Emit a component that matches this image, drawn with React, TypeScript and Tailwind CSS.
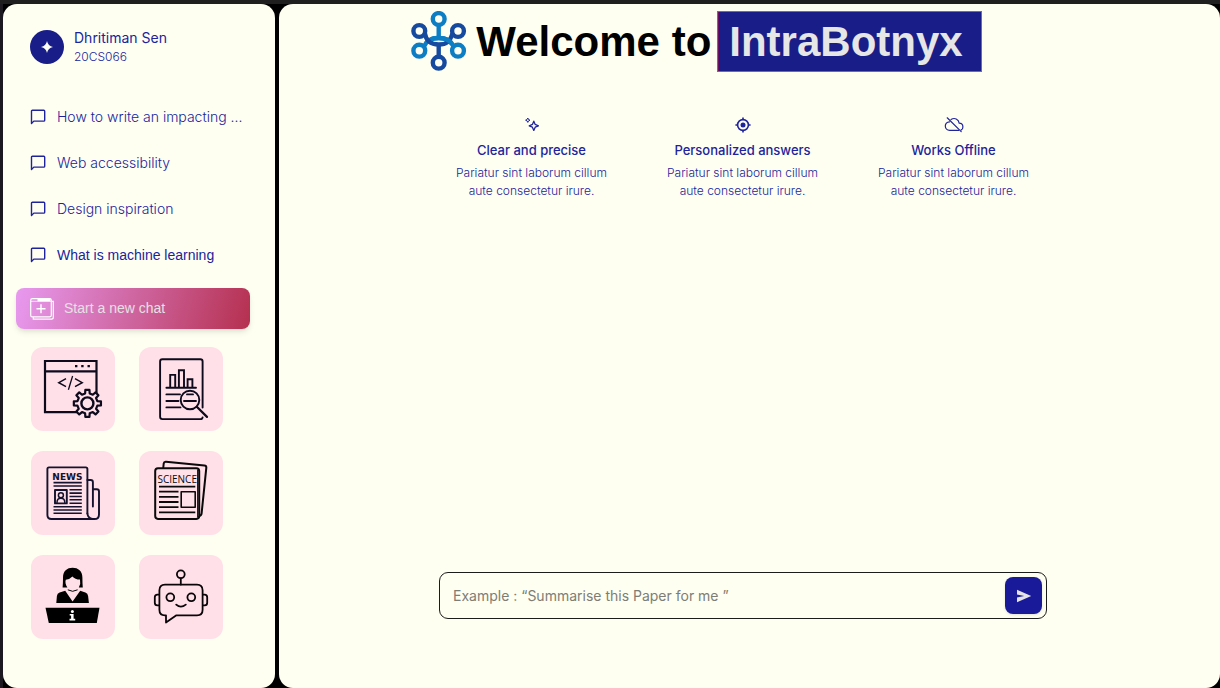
import React from "react";

const chats = [
  { title: "How to write an impacting ...", font: "font-['Inter'] font-light" },
  { title: "Web accessibility", font: "font-['Inter'] font-light" },
  { title: "Design inspiration", font: "font-['Inter'] font-light" },
  { title: "What is machine learning", font: "font-['Liberation_Sans']" },
];

function ChatIcon() {
  return (
    <svg width="16" height="16" viewBox="0 0 16 16" fill="none" stroke="#20249c" strokeWidth="1.4" strokeLinejoin="round" aria-hidden="true">
      <path d="M1.5 14.6V2.2Q1.5 1.3 2.4 1.3H13.8Q14.7 1.3 14.7 2.2V11.2Q14.7 12.1 13.8 12.1H3.8Z" />
    </svg>
  );
}

function NewChatIcon() {
  return (
    <svg width="24" height="22" viewBox="0 0 24 22" fill="none" stroke="#fff" strokeWidth="1.2" aria-hidden="true">
      <rect x="0.7" y="0.7" width="20.6" height="18.2" rx="1.6" />
      <path d="M7.5 2H20.5" strokeWidth="2.6" />
      <path d="M1 3.3H21" strokeWidth="0.8" />
      <path d="M22 3.4H23.3V19.3Q23.3 21.2 21.4 21.2H3.3V19.3" />
      <path d="M11 6.3V15.3M6.5 10.8H15.5" strokeWidth="1.4" />
    </svg>
  );
}

function LogoIcon() {
  const dark = "#164a9f";
  const light = "#0d7dc4";
  return (
    <svg width="57" height="60" viewBox="0 0 57 60" fill="none" strokeWidth="4.4" aria-hidden="true">
      <g stroke={light}>
        <circle cx="28.7" cy="8" r="5.9" />
        <circle cx="9.3" cy="39.7" r="5.9" />
        <circle cx="48" cy="39.7" r="5.9" />
        <path d="M28.7 14V26" />
        <path d="M14 35.5C16 30 21 27 28.7 27S41 29 43.5 35.5" />
      </g>
      <g stroke={dark}>
        <circle cx="9.3" cy="20" r="5.9" />
        <circle cx="48" cy="20" r="5.9" />
        <circle cx="28.7" cy="51.7" r="5.9" />
        <path d="M28.7 34V46" />
        <path d="M14.8 22C16 30 21 33.5 28.7 33.5S40 31 42.6 22" />
      </g>
      <path d="M21 28.2Q24 27 28.7 27Q38 27 42 33" stroke={light} />
    </svg>
  );
}

function SparkleIcon() {
  return (
    <svg width="16" height="16" viewBox="0 0 16 16" fill="none" stroke="#20249c" strokeWidth="1.3" strokeLinejoin="round" aria-hidden="true">
      <path d="M9.8 4.2L11.2 7.4L14.4 8.8L11.2 10.2L9.8 13.4L8.4 10.2L5.2 8.8L8.4 7.4Z" />
      <path d="M3.8 1L4.5 2.5L6 3.2L4.5 3.9L3.8 5.4L3.1 3.9L1.6 3.2L3.1 2.5Z" strokeWidth="1" />
    </svg>
  );
}

function TargetIcon() {
  return (
    <svg width="16" height="16" viewBox="0 0 16 16" fill="none" stroke="#20249c" strokeWidth="1.6" aria-hidden="true">
      <circle cx="8" cy="8" r="5.4" />
      <circle cx="8" cy="8" r="2.5" fill="#20249c" stroke="none" />
      <path d="M8 0.4V3M8 13V15.6M0.4 8H3M13 8H15.6" />
    </svg>
  );
}

function OfflineIcon() {
  return (
    <svg width="20" height="16" viewBox="0 0 20 16" fill="none" stroke="#20249c" strokeWidth="1.2" strokeLinecap="round" aria-hidden="true">
      <path d="M3.2 0.8L17.2 14.6" />
      <path d="M7 2.5C10.5 0.3 14.6 2 15.2 6.2C17.4 6.3 18.9 7.8 18.9 9.9C18.9 11.4 18.2 12.6 17 13.1" />
      <path d="M5.6 4.8C3 5 1.3 6.9 1.3 9.1C1.3 11.5 3.2 13.4 5.6 13.4H14.6" />
    </svg>
  );
}

function gearPath(cx: number, cy: number, outer: number, inner: number, teeth: number) {
  const step = (Math.PI * 2) / teeth;
  const points: string[] = [];
  for (let i = 0; i < teeth; i++) {
    const a = i * step - Math.PI / 2;
    const corners: [number, number][] = [
      [inner, -0.29],
      [outer, -0.19],
      [outer, 0.19],
      [inner, 0.29],
    ];
    for (const [r, k] of corners) {
      points.push(`${(cx + r * Math.cos(a + k * step)).toFixed(2)} ${(cy + r * Math.sin(a + k * step)).toFixed(2)}`);
    }
  }
  return `M${points.join("L")}Z`;
}

function CodeArt() {
  return (
    <svg className="size-full" viewBox="0 0 84 84" fill="none" stroke="#0d0a1c" strokeWidth="2.2" aria-hidden="true">
      <path d="M14 14H65.5V65.2H14Z" />
      <path d="M14 24.3H65.5" />
      <path d="M44 19.2H46.4M50.2 19.2H52.6M56.5 19.2H58.9" strokeWidth="2.2" />
      <path d="M35 31.7L27.8 35.7L35 39.7M44 31.7L51.2 35.7L44 39.7" strokeWidth="1.5" />
      <path d="M41.6 29L37.4 42.7" strokeWidth="1.3" />
      <circle cx="56.4" cy="56.4" r="13" fill="#ffe0e9" stroke="none" />
      <path d={gearPath(56.4, 56.4, 13.7, 10.2, 8)} fill="#ffe0e9" strokeLinejoin="round" />
      <circle cx="56.4" cy="56.4" r="6" strokeWidth="2.4" />
    </svg>
  );
}

function ReportArt() {
  return (
    <svg className="size-full" viewBox="0 0 84 84" fill="none" stroke="#0d0a1c" strokeWidth="1.9" strokeLinecap="round" aria-hidden="true">
      <path d="M63.6 60.5V14.5Q63.6 12.2 61.3 12.2H23.4Q21.1 12.2 21.1 14.5V69.8Q21.1 72.1 23.4 72.1H61.3Q63.4 72.1 63.6 70.4" />
      <path d="M31.2 40V27.9H36.2V40M39.9 40V23.3H45V40M48.6 40V32.2H53.4V40M27.4 40.8H57" strokeLinejoin="miter" />
      <path d="M27.4 47.4H41M27.4 54H39.5M27.4 60.4H41.5M48 47.4H54M45 54H57" />
      <circle cx="51" cy="53" r="9.3" />
      <path d="M57.8 59.7L68 69.9" strokeWidth="2.2" />
    </svg>
  );
}

function NewsArt() {
  return (
    <svg className="size-full" viewBox="0 0 84 84" fill="none" stroke="#14122c" strokeWidth="1.9" strokeLinecap="round" strokeLinejoin="round" aria-hidden="true">
      <path d="M56.4 62.5V18Q56.4 16.4 54.8 16.4H18Q16.4 16.4 16.4 18V64Q16.4 68 20.4 68H63.5Q68 68 68 63.4V40.4Q68 38.2 65.8 38.2H62" />
      <path d="M56.4 29H59.6Q61.9 29 61.9 31.2V55.5M56.4 62.5Q56.8 67 61.5 68" />
      <g strokeWidth="1.6" strokeLinecap="butt">
        <path d="M22.5 31.6H50.8M22.5 35H50.8M22.5 55.8H50.8M22.5 59H50.8M22.5 62.2H50.8" />
        <path d="M38.5 38.8H50.8M38.5 42.1H50.8M38.5 45.5H50.8M38.5 48.8H50.8M38.5 52.2H50.8" />
      </g>
      <rect x="24" y="39" width="11.8" height="13.4" />
      <circle cx="29.9" cy="44.2" r="2.5" strokeWidth="1.5" />
      <path d="M26 51.5Q26 47.3 29.9 47.3T33.8 51.5" strokeWidth="1.5" />
      <text x="36.4" y="28.6" textAnchor="middle" fill="#14122c" stroke="none" className="font-['DejaVu_Sans'] text-[9px] font-bold">NEWS</text>
    </svg>
  );
}

function ScienceArt() {
  return (
    <svg className="size-full" viewBox="0 0 84 84" fill="none" stroke="#0a0a0a" strokeWidth="2" strokeLinecap="round" strokeLinejoin="round" aria-hidden="true">
      <path d="M24.3 16.5L24.7 12.5Q25 10.5 27 10.7L65.4 14.6Q67.5 14.8 67.3 16.9L62.6 62.4Q62.3 64.8 59.8 65" />
      <rect x="16.2" y="17.3" width="44" height="50.6" rx="2.8" fill="#ffe0e9" />
      <path d="M58.7 19V66" strokeWidth="1.2" />
      <g strokeWidth="1.8" strokeLinecap="butt">
        <path d="M20 35.6H56.3M20 40.7H39.5M20 45.8H39.5M20 51H39.5M20 56.2H39.5M20 61.3H56.3" />
      </g>
      <rect x="42.2" y="40.7" width="14" height="15.6" strokeWidth="1.6" />
      <text x="38.2" y="32" textAnchor="middle" fill="#0a0a0a" stroke="none" className="font-['Open_Sans'] text-[10px]">SCIENCE</text>
    </svg>
  );
}

function HelpdeskArt() {
  return (
    <svg className="size-full" viewBox="0 0 84 84" fill="#000" aria-hidden="true">
      <path d="M31.6 32.4Q32 29 32 22.5C32 16 36 12.7 41.6 12.7S51.4 16 51.4 22.5Q51.4 29 51.8 32.4H47.8Q50 29 49 24.6Q44 24.4 41.4 21.4Q38.8 24.2 34.8 24.7Q33.6 28.4 36.4 32.4Z" />
      <path d="M36.8 34.8Q41.6 37.8 46.6 34.8" fill="none" stroke="#000" strokeWidth="1" />
      <path d="M34.2 35.8L41.6 46.6L49.2 35.8L54.4 37.5Q56.8 38.4 57.1 41L57.9 48H25.3L25.9 41Q26.2 38.4 28.6 37.5Z" />
      <path d="M14.5 52.7H68.5L65.8 68H17.8Z" />
      <circle cx="41.4" cy="56.6" r="1.5" fill="#fff" />
      <path d="M38.7 59H42.6V63.7H44.2V65.5H38.5V63.7H40.1V60.6H38.7Z" fill="#fff" />
    </svg>
  );
}

function BotArt() {
  return (
    <svg className="size-full" viewBox="0 0 84 84" fill="none" stroke="#0a0608" strokeWidth="1.8" strokeLinecap="round" strokeLinejoin="round" aria-hidden="true">
      <path d="M37.4 60.3H58Q63.6 60.3 63.6 54.7V35.3Q63.6 29.7 58 29.7H26Q20.4 29.7 20.4 35.3V54.7Q20.4 60.3 26 60.3H27V67.6Z" />
      <circle cx="41.8" cy="19.3" r="3.9" />
      <path d="M41.8 23.4V29.6" />
      <circle cx="31.3" cy="42.3" r="3.9" />
      <circle cx="52.3" cy="42.3" r="3.9" />
      <path d="M37.2 49.6Q41.8 53.6 46.8 49.6" />
      <path d="M20.2 39.6H18.4Q15.8 39.6 15.8 42.2V47.8Q15.8 50.4 18.4 50.4H20.2M63.8 39.6H65.6Q68.2 39.6 68.2 42.2V47.8Q68.2 50.4 65.6 50.4H63.8" />
    </svg>
  );
}

const tools = [
  { label: "Code", art: <CodeArt /> },
  { label: "Reports", art: <ReportArt /> },
  { label: "News", art: <NewsArt /> },
  { label: "Science", art: <ScienceArt /> },
  { label: "Help desk", art: <HelpdeskArt /> },
  { label: "Chatbot", art: <BotArt /> },
];

const features = [
  { title: "Clear and precise", icon: <SparkleIcon /> },
  { title: "Personalized answers", icon: <TargetIcon /> },
  { title: "Works Offline", icon: <OfflineIcon /> },
];

function Sidebar() {
  return (
    <aside className="flex w-[272px] shrink-0 flex-col rounded-[14px] bg-[#fffff1] text-[#20249c]">
      <div className="flex items-center gap-[10px] pt-6 pl-[27px]">
        <span className="flex size-[34px] items-center justify-center rounded-full bg-[#191d88]">
          <svg width="12" height="12" viewBox="0 0 12 12" fill="#fffff1" aria-hidden="true">
            <path d="M6 0Q7 5 12 6Q7 7 6 12Q5 7 0 6Q5 5 6 0Z" />
          </svg>
        </span>
        <div className="font-['Inter']">
          <p className="text-[14px] leading-5">Dhritiman Sen</p>
          <p className="text-[12px] leading-[18px] font-light">20CS066</p>
        </div>
      </div>

      <nav className="mt-7 flex flex-col pl-[27px]">
        {chats.map((chat) => (
          <a key={chat.title} href="#" className="flex h-[46px] items-center gap-[11px]">
            <ChatIcon />
            <span className={`${chat.font} text-[14px] leading-5 whitespace-nowrap`}>{chat.title}</span>
          </a>
        ))}
      </nav>

      <button
        type="button"
        className="mt-[10px] ml-[13px] flex h-[41px] w-[234px] items-center gap-[10px] rounded-lg bg-[linear-gradient(105deg,#e89af0_0%,#b5304f_100%)] pl-[14px] font-['Liberation_Sans'] text-[14px] text-[#e6e0e4] shadow-md shadow-black/10"
      >
        <NewChatIcon />
        Start a new chat
      </button>

      <div className="mt-[18px] ml-7 grid w-[192px] grid-cols-2 gap-x-6 gap-y-5 pb-9">
        {tools.map((tool) => (
          <button key={tool.label} type="button" aria-label={tool.label} className="size-[84px] rounded-xl bg-[#ffe0e9]">
            {tool.art}
          </button>
        ))}
      </div>
    </aside>
  );
}

export default function App() {
  return (
    <div className="flex min-h-screen flex-col bg-black">
      <div className="h-1 bg-[#1f1f1f]" />
      <div className="flex flex-1 gap-1 border-l-[3px] border-[#1c1a20]">
        <Sidebar />
        <main className="flex min-w-0 flex-1 flex-col rounded-[14px] bg-[#fffff1]">
          <header className="flex items-start justify-center pt-[7px] pr-[107px] font-['Liberation_Sans']">
            <LogoIcon />
            <h1 className="flex items-center gap-[6px] pl-[9px] text-[42px] leading-[59px] font-bold whitespace-nowrap text-black">
              Welcome to
              <span className="border border-[#6b6da8] bg-[#191d88] text-[#e6e6e6]">
                <span className="block border-l border-[#6a1060] pr-[18px] pl-[10px]">IntraBotnyx</span>
              </span>
            </h1>
          </header>

          <section className="mt-[45px] flex justify-center gap-[61px] pr-[14px] font-['Inter'] text-[#20249c]">
            {features.map((feature) => (
              <div key={feature.title} className="flex w-[150px] flex-col items-center text-center">
                {feature.icon}
                <h2 className="mt-[7px] text-[13px] leading-5 font-medium whitespace-nowrap">{feature.title}</h2>
                <p className="mt-1 text-[12px] leading-[18px] font-light whitespace-nowrap">
                  Pariatur sint laborum cillum
                  <br />
                  aute consectetur irure.
                </p>
              </div>
            ))}
          </section>

          <form
            onSubmit={(e) => e.preventDefault()}
            className="mt-auto mr-[173px] mb-[69px] ml-40 flex h-[47px] items-center rounded-[9px] border border-[#1c1c1c] pr-1 pl-[13px]"
          >
            <input
              type="text"
              aria-label="Message"
              placeholder="Example : “Summarise this Paper for me ”"
              className="min-w-0 flex-1 bg-transparent font-['Inter'] text-[14px] text-[#333] outline-none placeholder:text-[#7d7d75]"
            />
            <button type="submit" aria-label="Send" className="flex size-[37px] items-center justify-center rounded-lg bg-[#191a99] shadow-sm">
              <svg width="16" height="14" viewBox="0 0 16 14" fill="#e4e4e8" aria-hidden="true">
                <path d="M1 0.8L15.2 7L1 13.2V8.6L8.2 7L1 5.4Z" />
              </svg>
            </button>
          </form>
        </main>
      </div>
    </div>
  );
}
